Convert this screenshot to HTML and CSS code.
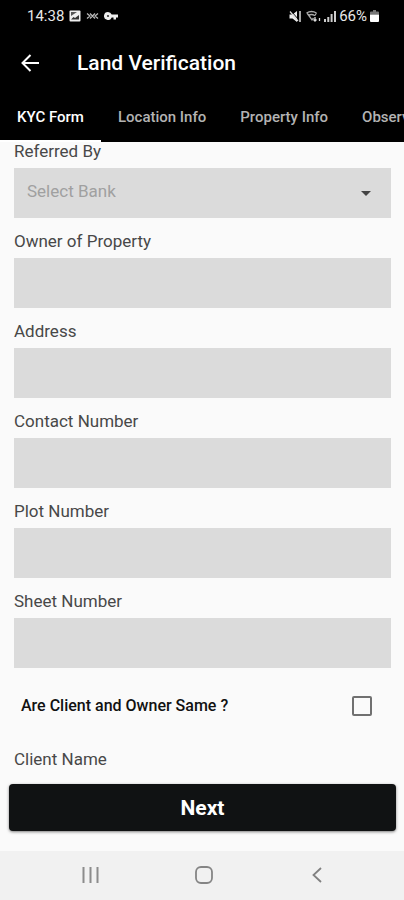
FILE: index.html
```html
<!DOCTYPE html>
<html lang="en">
<head>
<meta charset="utf-8">
<meta name="viewport" content="width=device-width, initial-scale=1">
<title>Land Verification</title>
<link rel="stylesheet" href="styles.css">
</head>
<body>
<header class="top">
  <div class="status">
    <div class="status-group">
      <span class="clock">14:38</span>
      <svg class="picture" width="12" height="12" viewBox="0 0 12 12"><rect x="0.5" y="0.5" width="11" height="11" rx="1" fill="#eee"/><path d="M2 9.500 4.500 7 6 8l4-3v4.500z" fill="#333"/><path d="M2 2h6L2 6z" fill="#555"/></svg>
      <svg width="13" height="8" viewBox="0 0 13 8" fill="none" stroke="#bbb" stroke-width="1.200"><path d="M1 1.500 4 4 1 6.500M4 1.500 9 6.500M9 1.500 4 6.500M12 1.500 9 4 12 6.500"/></svg>
      <svg width="14" height="8" viewBox="0 0 14 8"><path d="M4 0a4 4 0 1 0 3.700 5.500H9.500V7.500h2.500V5.500H14V2.500H7.700A4 4 0 0 0 4 0z" fill="#eee"/><circle cx="4" cy="4" r="1.100" fill="#333"/></svg>
    </div>
    <div class="status-group right">
      <svg width="12" height="13" viewBox="0 0 12 13"><path d="M0.500 4.500h3L8 1v11L3.500 8.500h-3z" fill="#eee"/><path d="M2 1 10 10" stroke="#000" stroke-width="1"/><path d="M1 1.500 9 11" stroke="#ddd" stroke-width="1.200"/><path d="M11 1v11" stroke="#ddd" stroke-width="1.500"/></svg>
      <svg class="wifi" width="15" height="12" viewBox="0 0 15 12" fill="none" stroke="#aaa" stroke-width="1.300"><path d="M0.500 3Q5.500 0 10.500 3M2.500 5.500q3-2 6 0M1 3l5 7 1.500-2M10.500 3 8.500 6"/><path d="M9 7v4M7.500 9.500 9 11l1.500-1.500M13.500 11V8" stroke="#ddd"/></svg>
      <svg width="12" height="12" viewBox="0 0 12 12" fill="#ccc"><path d="M0 9h2v3H0zM3.300 7h2v5h-2zM6.600 4h2v8h-2zM10 1h2v11h-2z"/></svg>
      <span class="battery-level">66%</span>
      <svg width="9" height="12" viewBox="0 0 9 12"><path d="M3 0h3v1.500h2q1 0 1 1v2H0v-2q0-1 1-1h2z" fill="#777"/><path d="M0 4.500h9V11q0 1-1 1H1q-1 0-1-1z" fill="#fff"/></svg>
    </div>
  </div>
  <div class="app-bar">
    <button class="icon-button" type="button" aria-label="Back">
      <svg width="18" height="18" viewBox="0 0 18 18" fill="none" stroke="#fff" stroke-width="2"><path d="M18 9H1.500M9.500 1 1.500 9l8 8"/></svg>
    </button>
    <h1 class="title">Land Verification</h1>
  </div>
  <nav class="tabs">
    <a class="tab active" href="#kyc">KYC Form</a>
    <a class="tab" href="#location">Location Info</a>
    <a class="tab" href="#property">Property Info</a>
    <a class="tab" href="#observation">Observation</a>
  </nav>
</header>

<main class="form" id="kyc">
  <div class="field">
    <label class="label" for="bank">Referred By</label>
    <div class="select-wrap">
      <select class="control select" id="bank"><option>Select Bank</option></select>
      <svg class="caret" width="10" height="5" viewBox="0 0 10 5"><path d="M0 0h10L5 5z" fill="#444"/></svg>
    </div>
  </div>
  <div class="field">
    <label class="label" for="owner">Owner of Property</label>
    <input class="control" id="owner" type="text">
  </div>
  <div class="field">
    <label class="label" for="address">Address</label>
    <input class="control" id="address" type="text">
  </div>
  <div class="field">
    <label class="label" for="contact">Contact Number</label>
    <input class="control" id="contact" type="tel">
  </div>
  <div class="field">
    <label class="label" for="plot">Plot Number</label>
    <input class="control" id="plot" type="text">
  </div>
  <div class="field">
    <label class="label" for="sheet">Sheet Number</label>
    <input class="control" id="sheet" type="text">
  </div>
  <div class="check-row">
    <label class="check-label" for="same">Are Client and Owner Same ?</label>
    <input class="checkbox" id="same" type="checkbox">
  </div>
  <p class="label section">Client Name</p>
</main>

<div class="actions">
  <button class="next" type="button">Next</button>
</div>

<footer class="system-nav">
  <button class="nav-button" type="button" aria-label="Recent apps"><svg width="17" height="16" viewBox="0 0 17 16" stroke="#8c8c8c" stroke-width="2"><path d="M1.500 0v16M8.500 0v16M15.500 0v16"/></svg></button>
  <button class="nav-button" type="button" aria-label="Home"><svg width="18" height="18" viewBox="0 0 18 18" fill="none" stroke="#858585" stroke-width="1.800"><rect x="1" y="1" width="16" height="16" rx="5"/></svg></button>
  <button class="nav-button" type="button" aria-label="Back"><svg width="10" height="16" viewBox="0 0 10 16" fill="none" stroke="#808080" stroke-width="1.800"><path d="M9 1 1.500 8 9 15"/></svg></button>
</footer>
</body>
</html>
```
FILE: styles.css
```css
* {
  box-sizing: border-box;
}

body {
  margin: 0;
  height: 100vh;
  display: flex;
  flex-direction: column;
  background: #fafafa;
  color: #484848;
  font-family: Roboto, "Liberation Sans", sans-serif;
}

svg {
  display: block;
  flex: none;
}

button {
  border: 0;
  padding: 0;
  background: none;
  font-family: inherit;
}

.top {
  background: #000;
  color: #fff;
}

.status {
  display: flex;
  justify-content: space-between;
  height: 32px;
  padding: 0 25px 0 27px;
}

.status-group {
  display: flex;
  align-items: center;
  gap: 5px;
}

.status-group.right {
  gap: 3px;
}

.wifi {
  margin-left: 2px;
}

.clock,
.battery-level {
  font-size: 15px;
  line-height: 32px;
  color: #e8e8e8;
}

.app-bar {
  display: flex;
  align-items: center;
  gap: 38px;
  height: 62px;
  padding: 0 21px;
}

.icon-button {
  cursor: pointer;
}

.title {
  margin: 0;
  font-size: 21px;
  line-height: 28px;
  font-weight: 500;
}

.tabs {
  display: flex;
  height: 48px;
  overflow: hidden;
}

.tab {
  flex: none;
  padding: 0 17px;
  border-bottom: 2px solid transparent;
  color: #b3b3b3;
  font-size: 15px;
  line-height: 46px;
  font-weight: 500;
  text-decoration: none;
}

.tab.active {
  color: #fff;
  border-color: #fff;
}

.form {
  flex: 1;
  min-height: 0;
  overflow-y: auto;
  scrollbar-width: none;
  padding: 0 13px 0 14px;
}

.field {
  display: flex;
  flex-direction: column;
  gap: 8px;
  margin-bottom: 14px;
}

.label {
  font-size: 17px;
  line-height: 18px;
}

.control {
  display: block;
  width: 100%;
  height: 50px;
  padding: 0 13px;
  border: 0;
  border-radius: 0;
  background: #dbdbdb;
  color: #404040;
  font-family: inherit;
  font-size: 17px;
}

.select-wrap {
  position: relative;
}

.select {
  appearance: none;
  padding-bottom: 4px;
  color: #a0a0a0;
}

.caret {
  position: absolute;
  right: 20px;
  top: 23px;
  pointer-events: none;
}

.check-row {
  display: flex;
  align-items: center;
  justify-content: space-between;
  height: 48px;
  padding: 0 19px 0 7px;
}

.check-label {
  color: #111;
  font-size: 16px;
  line-height: 20px;
  font-weight: 500;
}

.checkbox {
  appearance: none;
  width: 20px;
  height: 20px;
  margin: 0;
  border: 2px solid #707070;
  border-radius: 2px;
}

.section {
  margin: 20px 0 0;
}

.actions {
  padding: 8px 8px 20px 9px;
}

.next {
  display: block;
  width: 100%;
  height: 47px;
  border-radius: 4px;
  background: #101213;
  box-shadow: 0 1px 3px rgba(0, 0, 0, 0.5);
  color: #fff;
  font-size: 21px;
  font-weight: 700;
}

.system-nav {
  display: flex;
  justify-content: space-between;
  align-items: center;
  height: 49px;
  padding: 0 57px 2px 60px;
  background: #f1f1f1;
}

.nav-button {
  display: grid;
  place-items: center;
  width: 60px;
  height: 40px;
}
```
